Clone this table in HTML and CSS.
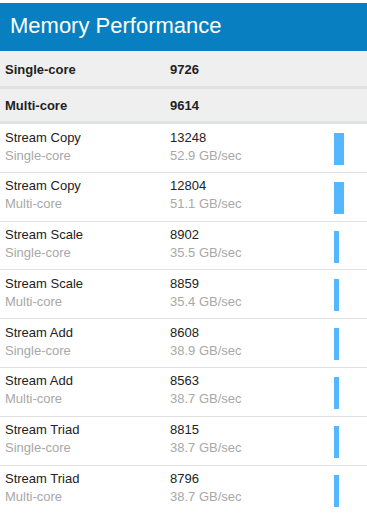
FILE: index.html
```html
<!DOCTYPE html>
<html>
<head>
<meta charset="utf-8">
<link rel="stylesheet" href="styles.css">
</head>
<body>
<div class="panel">
  <div class="header">Memory Performance</div>
  <div class="summary first"><span class="lbl">Single-core</span><span class="val">9726</span></div>
  <div class="summary second"><span class="lbl">Multi-core</span><span class="val">9614</span></div>

  <div class="row"><div class="name">Stream Copy<div class="sub">Single-core</div></div><div class="score">13248<div class="sub">52.9 GB/sec</div></div><div class="barcell"><div class="bar wide"></div></div></div>
  <div class="row"><div class="name">Stream Copy<div class="sub">Multi-core</div></div><div class="score">12804<div class="sub">51.1 GB/sec</div></div><div class="barcell"><div class="bar wide"></div></div></div>
  <div class="row"><div class="name">Stream Scale<div class="sub">Single-core</div></div><div class="score">8902<div class="sub">35.5 GB/sec</div></div><div class="barcell"><div class="bar"></div></div></div>
  <div class="row"><div class="name">Stream Scale<div class="sub">Multi-core</div></div><div class="score">8859<div class="sub">35.4 GB/sec</div></div><div class="barcell"><div class="bar"></div></div></div>
  <div class="row"><div class="name">Stream Add<div class="sub">Single-core</div></div><div class="score">8608<div class="sub">38.9 GB/sec</div></div><div class="barcell"><div class="bar"></div></div></div>
  <div class="row"><div class="name">Stream Add<div class="sub">Multi-core</div></div><div class="score">8563<div class="sub">38.7 GB/sec</div></div><div class="barcell"><div class="bar"></div></div></div>
  <div class="row"><div class="name">Stream Triad<div class="sub">Single-core</div></div><div class="score">8815<div class="sub">38.7 GB/sec</div></div><div class="barcell"><div class="bar"></div></div></div>
  <div class="row last"><div class="name">Stream Triad<div class="sub">Multi-core</div></div><div class="score">8796<div class="sub">38.7 GB/sec</div></div><div class="barcell"><div class="bar"></div></div></div>
</div>
</body>
</html>
```
FILE: styles.css
```css
html, body {
  margin: 0;
  padding: 0;
  background: #ffffff;
}
body {
  font-family: "Liberation Sans", Arial, sans-serif;
  color: #222222;
}
.panel {
  padding-top: 3px;
}
.header {
  background: #077fc0;
  color: #ffffff;
  font-size: 22px;
  height: 48px;
  line-height: 46px;
  padding-left: 10px;
  box-sizing: border-box;
}
.summary {
  display: grid;
  grid-template-columns: 165px 1fr;
  padding-left: 5px;
  background: #efefef;
  font-weight: bold;
  font-size: 13px;
  align-items: center;
  border-bottom: 3px solid #dfe1e5;
  box-sizing: border-box;
}
.summary.first {
  height: 38px;
  padding-top: 2px;
}
.summary.second {
  height: 35px;
}
.row {
  display: grid;
  grid-template-columns: 165px 164px 38px;
  padding-left: 5px;
  font-size: 13px;
  line-height: 18px;
  height: 48.8px;
  box-sizing: border-box;
  padding-top: 4.5px;
  border-bottom: 1px solid #e1e1e4;
}
.row.last {
  border-bottom: none;
}
.sub {
  color: #a8a8a8;
}
.barcell {
  padding-top: 4.5px;
}
.bar {
  width: 5px;
  height: 32px;
  background: #55b7ff;
}
.bar.wide {
  width: 10px;
}
```
